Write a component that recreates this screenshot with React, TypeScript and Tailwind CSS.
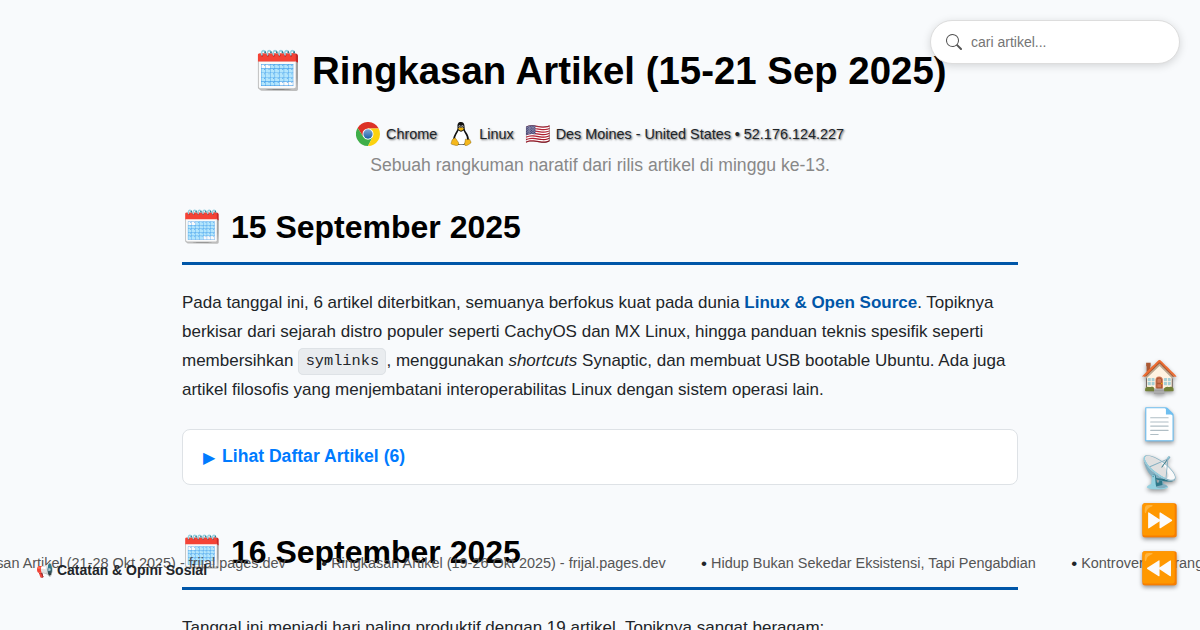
import React from "react";

const ticker = [
  "Ringkasan Artikel (21-28 Okt 2025) - frijal.pages.dev",
  "Ringkasan Artikel (19-26 Okt 2025) - frijal.pages.dev",
  "Hidup Bukan Sekedar Eksistensi, Tapi Pengabdian",
  "Kontroversi Larangan Impor",
];

const shortcuts = ["🏠", "📄", "📡", "⏩", "⏪"];

function ChromeIcon() {
  return (
    <svg viewBox="0 0 48 48" className="size-6">
      <defs>
        <linearGradient id="chrome-core" x1="0" y1="0" x2="0" y2="1">
          <stop offset="0" stopColor="#7fa9d6" />
          <stop offset="1" stopColor="#1c5fa8" />
        </linearGradient>
      </defs>
      <path d="M24 13 H45.3 L44.8 12 A24 24 0 0 0 3.2 12 L14.5 29.5 Z" fill="#dc3226" />
      <path d="M3.2 12 A24 24 0 0 0 24 48 L33.500 29.500 L24 35 L14.5 29.5 Z" fill="#3fae49" />
      <path d="M33.5 29.5 L24 48 A24 24 0 0 0 45.3 13 H24 Z" fill="#fbd20f" />
      <circle cx="24" cy="24" r="11" fill="#fff" />
      <circle cx="24" cy="24" r="9.3" fill="url(#chrome-core)" />
    </svg>
  );
}

function TuxIcon() {
  return (
    <svg viewBox="0 0 48 48" className="size-6">
      <path d="M24 0 C18 0 16.5 4 17 10 C17.4 15 15.5 17 13 21.500 C10 27 8 31 8 37 C9 43 16 46 24 46 C32 46 39 43 40 37 C40 30 38 25 34.500 20.500 C31 16 31.500 13 31 8 C30.600 3 28.500 0 24 0 Z" fill="#111" />
      <path d="M19 17 C17 22 12 28 12 34 C13 41 18 45 24 45 C31 45 36 41 36 34 C36 27 31 22 29 17 C26 20 22 20 19 17 Z" fill="#fff" />
      <ellipse cx="21.200" cy="8.800" rx="1.900" ry="2.500" fill="#ddd" />
      <ellipse cx="26.800" cy="8.800" rx="2.100" ry="2.500" fill="#ddd" />
      <circle cx="21.700" cy="9.300" r="1.200" fill="#111" />
      <circle cx="26.500" cy="9.300" r="1.200" fill="#111" />
      <path d="M18 13 Q24 8.500 30 13 Q28 17.500 23.500 17.500 Q19.500 16.500 18 13 Z" fill="#e8b010" />
      <path d="M6 36 Q11 30 13.500 33 L19 41 Q21 46 15.500 47.500 L5 44.500 Q3 43 5 40 Z" fill="#f5b81c" stroke="#5c4300" strokeWidth=".7" />
      <path d="M33 34 Q38 36 41 34 L44 40 Q45 42 41 44 L35 47.500 Q31 48 31 44 Z" fill="#f5b81c" stroke="#5c4300" strokeWidth=".7" />
    </svg>
  );
}

function SearchIcon() {
  return (
    <svg viewBox="0 0 16 16" className="size-4 shrink-0" fill="#555">
      <path d="M11.742 10.344a6.500 6.500 0 1 0-1.397 1.398h-.001c.03.04.062.078.098.115l3.850 3.850a1 1 0 0 0 1.415-1.414l-3.850-3.850a1.007 1.007 0 0 0-.115-.100zM12 6.500a5.500 5.500 0 1 1-11 0 5.500 5.500 0 0 1 11 0z" />
    </svg>
  );
}

function DayHeading({ children }: { children: React.ReactNode }) {
  return (
    <h2 className="h-[66px] border-b-3 border-[#0056a8] pt-[4px] text-[32px] leading-[48px] font-bold text-black">
      🗓️ {children}
    </h2>
  );
}

export default function App() {
  return (
    <div className="relative h-[630px] overflow-hidden bg-[#f8fafc] font-['Liberation_Sans',Arial,sans-serif] text-[17px] leading-[29px] text-[#212529]">
      <main className="mx-auto w-[836px] pt-[40px]">
        <h1 className="text-center text-[38.4px] leading-[62px] font-bold text-black"><span className="mr-[-1px] ml-px">🗓️</span> Ringkasan Artikel (15-21 Sep 2025)</h1>
        <div className="mt-[17px] flex h-[30px] items-center justify-center gap-3 text-[14.4px] [text-shadow:1px_1px_2px_rgba(0,0,0,0.6)]">
          <span className="flex items-center gap-1.5"><ChromeIcon />Chrome</span>
          <span className="flex items-center gap-1.5"><TuxIcon />Linux</span>
          <span className="flex items-center gap-1.5">
            <span className="mr-px ml-[-1px] flex h-6 w-6 items-center pb-[2px] text-[20.5px] [text-shadow:none]">🇺🇸</span>
            Des Moines - United States • 52.176.124.227
          </span>
        </div>
        <p className="mt-[2px] text-center text-[17.6px] text-[#888]">Sebuah rangkuman naratif dari rilis artikel di minggu ke-13.</p>

        <section className="mt-[19px]">
          <DayHeading>15 September 2025</DayHeading>
          <p className="mt-[23px]">
            Pada tanggal ini, 6 artikel diterbitkan, semuanya berfokus kuat pada dunia{" "}
            <strong className="text-[#0056a8]">Linux &amp; Open Source</strong>. Topiknya berkisar dari sejarah distro populer seperti CachyOS dan MX Linux, hingga panduan teknis spesifik seperti membersihkan{" "}
            <code className="rounded-[5px] border border-[#dee2e6] bg-[#e9ecef] px-[6.400px] py-[3.400px] align-[0.4px] font-['Liberation_Mono',monospace] text-[15.3px] leading-[20px]">symlinks</code>, menggunakan <em>shortcuts</em> Synaptic, dan membuat USB bootable Ubuntu. Ada juga artikel filosofis yang menjembatani interoperabilitas Linux dengan sistem operasi lain.
          </p>
          <div className="mt-[25px] flex h-[56px] items-center rounded-[8px] border border-[#dee2e6] bg-white px-[19px] pb-[2px] text-[17.6px] font-bold text-[#007bff]">
            <span className="mt-[3px] mr-[5px] ml-[0.5px] w-[14.500px] text-[15.800px] font-normal">▶</span>
            Lihat Daftar Artikel (6)
          </div>
        </section>

        <section className="mt-[39px]">
          <DayHeading>16 September 2025</DayHeading>
          <p className="mt-[23px]">Tanggal ini menjadi hari paling produktif dengan 19 artikel. Topiknya sangat beragam:</p>
        </section>
      </main>

      <div className="absolute top-[549px] left-[-58.8px] flex gap-[35.3px] whitespace-nowrap text-[14.45px] text-[#555]">
        {ticker.map((title) => (
          <span key={title} className="flex">
            <span className="w-[10px] text-[17px] text-[#212529]">•</span>
            {title}
          </span>
        ))}
      </div>
      <div className="absolute top-[556px] left-[36px] text-[14px] font-bold whitespace-nowrap">📢 Catatan &amp; Opini Sosial</div>

      <label className="absolute top-5 right-5 flex h-[44px] w-[250px] items-center gap-[9px] rounded-full border border-[#ddd] bg-white pl-[15px] shadow-[0_2px_8px_rgba(0,0,0,0.15)]">
        <SearchIcon />
        <input placeholder="cari artikel..." className="w-[190px] text-[14px] outline-none placeholder:text-[#757575]" />
      </label>

      <nav className="absolute top-[353px] right-[21px] flex w-10 flex-col text-center text-[31.2px]">
        {shortcuts.map((icon) => (
          <a key={icon} className="flex h-12 items-center justify-center leading-[48px] [text-shadow:0_2px_4px_rgba(0,0,0,0.4)]">{icon}</a>
        ))}
      </nav>
    </div>
  );
}
